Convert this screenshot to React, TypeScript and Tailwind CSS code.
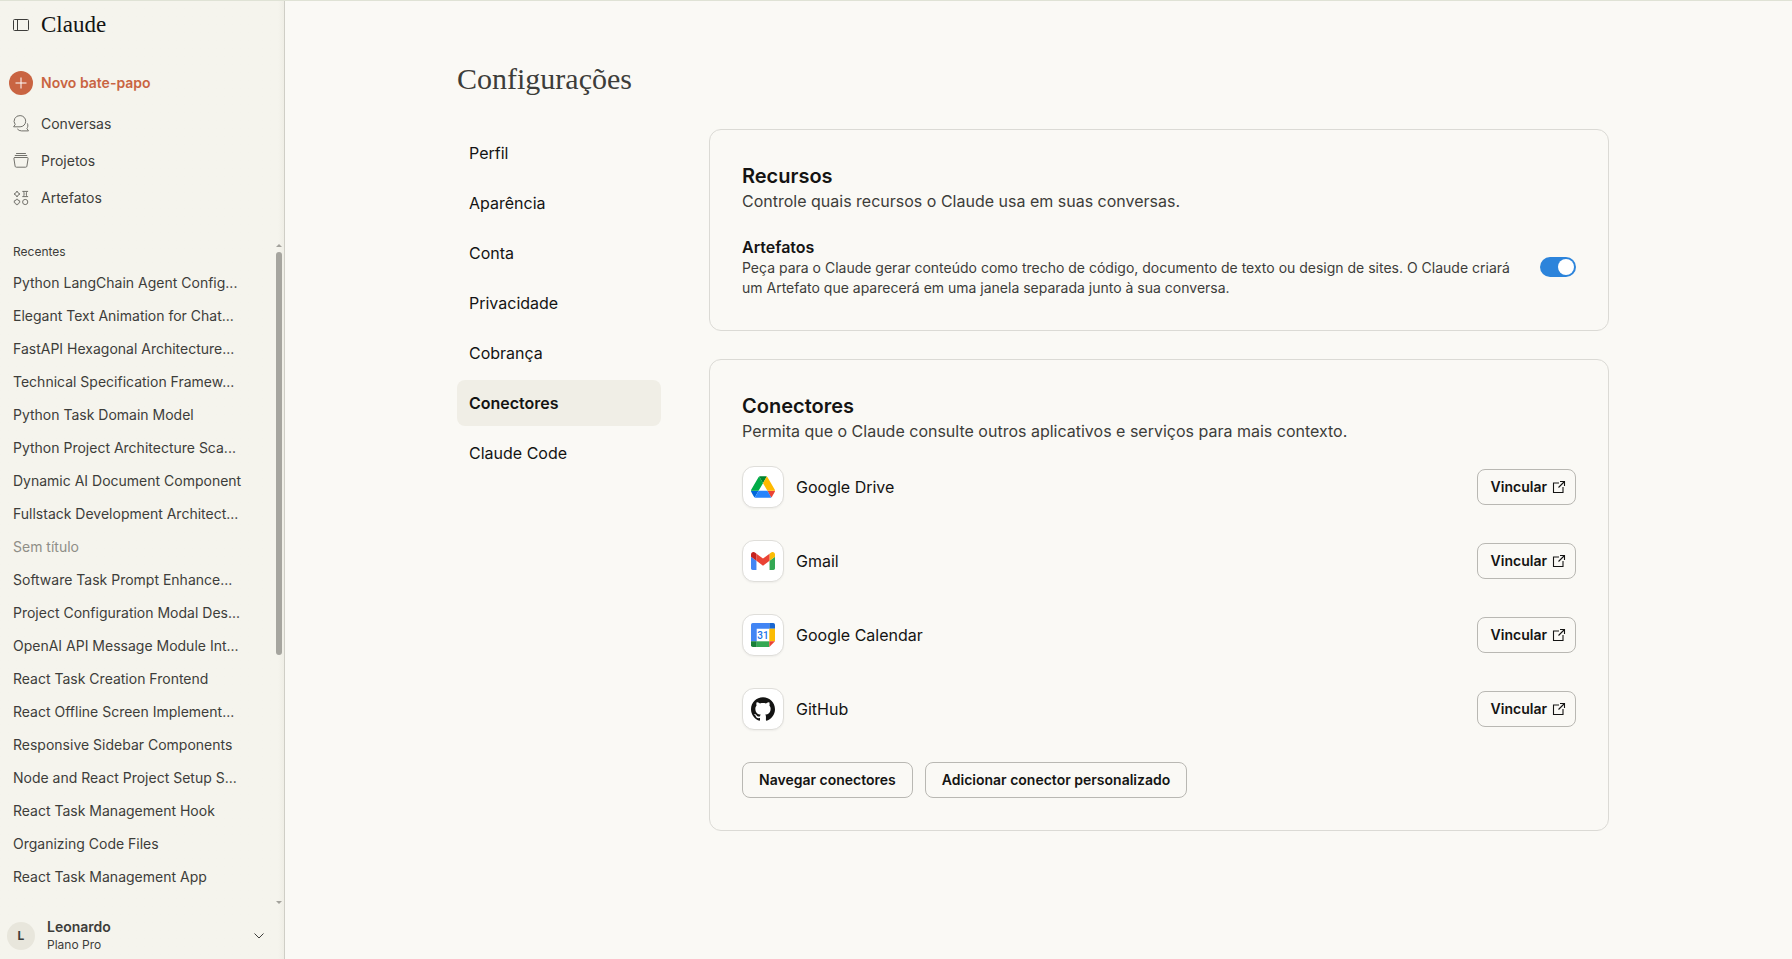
import { useState } from "react";
import type { ReactNode } from "react";

const recents = [
  "Python LangChain Agent Config...",
  "Elegant Text Animation for Chat...",
  "FastAPI Hexagonal Architecture...",
  "Technical Specification Framew...",
  "Python Task Domain Model",
  "Python Project Architecture Sca...",
  "Dynamic AI Document Component",
  "Fullstack Development Architect...",
  "Sem título",
  "Software Task Prompt Enhance...",
  "Project Configuration Modal Des...",
  "OpenAI API Message Module Int...",
  "React Task Creation Frontend",
  "React Offline Screen Implement...",
  "Responsive Sidebar Components",
  "Node and React Project Setup S...",
  "React Task Management Hook",
  "Organizing Code Files",
  "React Task Management App",
];

const sections = ["Perfil", "Aparência", "Conta", "Privacidade", "Cobrança", "Conectores", "Claude Code"];

function SidebarIcon() {
  return (
    <svg width="16" height="12" viewBox="0 0 16 12" fill="none" stroke="currentColor" aria-hidden="true">
      <rect x=".5" y=".5" width="15" height="11" rx="1" />
      <path d="M4.5.5v11" />
    </svg>
  );
}

function ChatsIcon() {
  return (
    <svg width="16" height="17" viewBox="0 0 16 17" fill="none" stroke="currentColor" strokeLinejoin="round" aria-hidden="true">
      <path d="M7.1.6a5.6 5.6 0 1 1 0 11.2H.6l1.6-2.3A5.6 5.6 0 0 1 7.1.6Z" />
      <path d="M4.3 13.9a5.4 5.4 0 0 0 4.2 2h7l-1.6-2.3c1-1.4 1.3-3.3.5-5.2" />
    </svg>
  );
}

function ProjectsIcon() {
  return (
    <svg width="16" height="15" viewBox="0 0 16 15" fill="none" stroke="currentColor" strokeLinejoin="round" strokeLinecap="round" aria-hidden="true">
      <path d="M3.5.5h9M2.2 2.5h11.6" />
      <path d="M1.8 4.5h12.4a.9.9 0 0 1 .9 1l-1.2 7.700a1.200 1.200 0 0 1-1.200 1H3.300a1.200 1.200 0 0 1-1.200-1L.9 5.500a.9.900 0 0 1 .9-1Z" />
    </svg>
  );
}

function ArtifactsIcon() {
  return (
    <svg width="16" height="16" viewBox="0 0 16 16" fill="none" stroke="currentColor" strokeLinejoin="round" aria-hidden="true">
      <path d="M4 1 5.1 2.9 7 4 5.1 5.1 4 7 2.9 5.1 1 4l1.9-1.1Z" />
      <path d="M9.3 1.4h5.8M9.3 6.6h5.8M10.5 1.4c.8 1.6.8 3.6 0 5.2M13.9 1.4c-.8 1.6-.8 3.6 0 5.2" />
      <path d="M3.2 9.3h1.6l.4 1.2 1.5.3v1.9l-1.3.5-.6 1.4H3.2l-.6-1.4-1.3-.5v-1.9l1.5-.3Z" />
      <circle cx="12.2" cy="12" r="2.6" />
    </svg>
  );
}

function ExternalIcon() {
  return (
    <svg width="14" height="14" viewBox="0 0 14 14" fill="none" stroke="currentColor" strokeWidth="1.1" aria-hidden="true">
      <path d="M7 3H1.5v9.500H11V7M8 1.500h4.500V6M12.500 1.500 6.500 7.500" />
    </svg>
  );
}

function DriveLogo() {
  return (
    <svg width="24" height="22" viewBox="0 0 87.3 78" aria-hidden="true">
      <path fill="#0066da" d="m6.6 66.85 3.85 6.65c.8 1.4 1.95 2.5 3.3 3.3l13.75-23.8h-27.5c0 1.55.4 3.1 1.2 4.5z" />
      <path fill="#00ac47" d="m43.65 25-13.75-23.8c-1.35.8-2.5 1.9-3.3 3.3l-25.4 44a9.06 9.06 0 0 0 -1.2 4.5h27.5z" />
      <path fill="#ea4335" d="m73.55 76.8c1.35-.8 2.5-1.9 3.3-3.3l1.6-2.75 7.65-13.25c.8-1.4 1.2-2.95 1.2-4.5h-27.502l5.852 11.5z" />
      <path fill="#00832d" d="m43.65 25 13.75-23.8c-1.35-.8-2.9-1.2-4.5-1.2h-18.5c-1.6 0-3.15.45-4.5 1.2z" />
      <path fill="#2684fc" d="m59.8 53h-32.3l-13.75 23.8c1.35.8 2.9 1.2 4.5 1.2h50.8c1.6 0 3.15-.45 4.5-1.2z" />
      <path fill="#ffba00" d="m73.4 26.5-12.7-22c-.8-1.4-1.95-2.5-3.3-3.3l-13.75 23.8 16.15 28h27.45c0-1.55-.4-3.1-1.2-4.5z" />
    </svg>
  );
}

function GmailLogo() {
  return (
    <svg width="24" height="18" viewBox="52 42 88 66" aria-hidden="true">
      <path fill="#4285f4" d="M58 108h14V74L52 59v43c0 3.32 2.69 6 6 6" />
      <path fill="#34a853" d="M120 108h14c3.32 0 6-2.69 6-6V59l-20 15" />
      <path fill="#fbbc04" d="M120 48v26l20-15v-8c0-7.42-8.47-11.65-14.4-7.2" />
      <path fill="#ea4335" d="M72 74V48l24 18 24-18v26L96 92" />
      <path fill="#c5221f" d="M52 51v8l20 15V48l-5.6-4.2c-5.94-4.45-14.4-.22-14.4 7.2" />
    </svg>
  );
}

function CalendarLogo() {
  return (
    <svg width="24" height="24" viewBox="0 0 24 24" aria-hidden="true">
      <path fill="#fff" d="M5.5 5.5h13v13h-13z" />
      <path fill="#4285f4" d="M1.8 0h16.500v5.700H5.700v12.600H0V1.800A1.800 1.800 0 0 1 1.800 0Z" />
      <path fill="#1967d2" d="M18.300 0h3.900A1.800 1.800 0 0 1 24 1.800v3.900h-5.700z" />
      <path fill="#fbbc04" d="M18.300 5.700H24v12.600h-5.700z" />
      <path fill="#34a853" d="M5.700 18.300h12.600V24H5.700z" />
      <path fill="#188038" d="M0 18.300h5.700V24H1.800A1.800 1.800 0 0 1 0 22.200z" />
      <path fill="#ea4335" d="M18.300 24 24 18.300h-5.700z" />
      <text x="12" y="15.600" textAnchor="middle" fontSize="10" fontWeight="500" fontFamily="Roboto, sans-serif" fill="#1a73e8">31</text>
    </svg>
  );
}

function GitHubLogo() {
  return (
    <svg width="24" height="24" viewBox="0 0 24 24" fill="#141413" aria-hidden="true">
      <path d="M12 .297c-6.63 0-12 5.373-12 12 0 5.303 3.438 9.8 8.205 11.385.6.113.82-.258.82-.577 0-.285-.01-1.04-.015-2.04-3.338.724-4.042-1.61-4.042-1.61C4.422 18.07 3.633 17.7 3.633 17.7c-1.087-.744.084-.729.084-.729 1.205.084 1.838 1.236 1.838 1.236 1.07 1.835 2.809 1.305 3.495.998.108-.776.417-1.305.76-1.605-2.665-.3-5.466-1.332-5.466-5.93 0-1.31.465-2.38 1.235-3.22-.135-.303-.54-1.523.105-3.176 0 0 1.005-.322 3.3 1.23.96-.267 1.98-.399 3-.405 1.02.006 2.04.138 3 .405 2.28-1.552 3.285-1.23 3.285-1.23.645 1.653.24 2.873.12 3.176.765.84 1.23 1.91 1.23 3.22 0 4.61-2.805 5.625-5.475 5.92.42.36.81 1.096.81 2.22 0 1.606-.015 2.896-.015 3.286 0 .315.21.69.825.57C20.565 22.092 24 17.592 24 12.297c0-6.627-5.373-12-12-12" />
    </svg>
  );
}

const connectors: { name: string; logo: ReactNode }[] = [
  { name: "Google Drive", logo: <DriveLogo /> },
  { name: "Gmail", logo: <GmailLogo /> },
  { name: "Google Calendar", logo: <CalendarLogo /> },
  { name: "GitHub", logo: <GitHubLogo /> },
];

const menu: { name: string; icon: ReactNode }[] = [
  { name: "Conversas", icon: <ChatsIcon /> },
  { name: "Projetos", icon: <ProjectsIcon /> },
  { name: "Artefatos", icon: <ArtifactsIcon /> },
];

function Sidebar() {
  return (
    <aside className="sticky top-0 flex h-screen w-[285px] shrink-0 flex-col border-r border-[#cfcec6] bg-[#f5f4ed] bg-linear-to-l from-[#efeee6] to-[#f5f4ed] to-[6px] text-[#3d3d3a]">
      <div className="flex h-12 shrink-0 items-center gap-3 pl-[13px]">
        <button type="button" aria-label="Barra lateral">
          <SidebarIcon />
        </button>
        <a href="#" className="font-['Liberation_Serif',serif] text-[23px] text-[#141413]">
          Claude
        </a>
      </div>

      <a href="#" className="mt-[22px] flex h-6 shrink-0 items-center gap-2 pl-[9px] text-sm font-semibold text-[#c96442]">
        <span className="flex size-6 items-center justify-center rounded-full bg-[#c96442]">
          <svg width="12" height="12" viewBox="0 0 12 12" stroke="#fff" aria-hidden="true">
            <path d="M6 .5v11M.5 6h11" />
          </svg>
        </span>
        Novo bate-papo
      </a>

      <nav className="mt-[10px] shrink-0">
        <ul>
          {menu.map((item) => (
            <li key={item.name}>
              <a href="#" className="flex h-[37px] items-center gap-3 pl-[13px] text-sm">
                <span className="flex w-4 justify-center text-[#73726c]">{item.icon}</span>
                {item.name}
              </a>
            </li>
          ))}
        </ul>
      </nav>

      <div className="mt-[22px] flex min-h-0 grow gap-1 pr-[2px]">
        <div className="min-w-0 grow overflow-hidden pl-[13px]">
          <h2 className="flex h-7 items-center text-xs">Recentes</h2>
          <ul>
            {recents.map((title) => (
              <li key={title}>
                <a
                  href="#"
                  className={`block truncate text-sm leading-[33px] ${title === "Sem título" ? "text-[#8f8e87]" : ""}`}
                >
                  {title}
                </a>
              </li>
            ))}
          </ul>
        </div>
        <div className="flex w-[6px] shrink-0 flex-col items-center pt-[6px] text-[#a3a29c]" aria-hidden="true">
          <svg width="6" height="3" viewBox="0 0 6 3" fill="currentColor">
            <path d="M3 0 6 3H0z" />
          </svg>
          <div className="mt-[5px] h-[61%] w-[6px] shrink-0 rounded-full bg-[#a6a59f]" />
          <svg className="mt-auto" width="6" height="3" viewBox="0 0 6 3" fill="currentColor">
            <path d="M0 0h6L3 3z" />
          </svg>
        </div>
      </div>

      <button type="button" className="mt-2 flex h-12 shrink-0 items-center gap-3 pr-5 pl-[7px] text-left">
        <span className="flex size-7 items-center justify-center rounded-full bg-[#e8e6dc] text-xs font-bold">L</span>
        <span className="grow">
          <span className="block text-sm leading-[18px] font-semibold">Leonardo</span>
          <span className="block text-xs leading-[18px]">Plano Pro</span>
        </span>
        <svg width="10" height="6" viewBox="0 0 10 6" fill="none" stroke="currentColor" aria-hidden="true">
          <path d="m.5.5 4.5 4.500L9.500.5" />
        </svg>
      </button>
    </aside>
  );
}

function Card({ title, text, children }: { title: string; text: string; children: ReactNode }) {
  return (
    <section className="rounded-xl border border-[#dbdad5] p-8">
      <h2 className="text-xl leading-7 font-semibold text-[#141413]">{title}</h2>
      <p className="text-base leading-[22px]">{text}</p>
      {children}
    </section>
  );
}

const outlined =
  "flex h-9 items-center rounded-lg border border-[#b9b8b3] text-sm font-semibold whitespace-nowrap text-[#141413]";

export default function App() {
  const [enabled, setEnabled] = useState(true);
  return (
    <div className="flex min-h-screen border-t border-[#dfe2d5] bg-[#faf9f5] font-['Inter',sans-serif] text-[#3d3d3a]">
      <Sidebar />
      <main className="min-w-0 grow pr-[11px]">
        <div className="mx-auto max-w-6xl">
          <h1 className="pt-14 font-['Liberation_Serif',serif] text-3xl leading-[44px]">Configurações</h1>
          <div className="mt-7 flex items-start gap-12">
            <nav className="w-[204px] shrink-0">
              <ul className="flex flex-col gap-1 pt-[1px]">
                {sections.map((name) => (
                  <li key={name}>
                    <a
                      href="#"
                      className={`flex h-[46px] items-center rounded-lg px-3 text-base text-[#141413] ${
                        name === "Conectores" ? "bg-[#f0eee6] font-semibold" : ""
                      }`}
                    >
                      {name}
                    </a>
                  </li>
                ))}
              </ul>
            </nav>

            <div className="flex min-w-0 grow flex-col gap-7">
              <Card title="Recursos" text="Controle quais recursos o Claude usa em suas conversas.">
                <div className="mt-6 flex items-center gap-6">
                  <label htmlFor="artifacts" className="grow">
                    <span className="block text-base leading-[22px] font-semibold text-[#141413]">Artefatos</span>
                    <span className="block text-sm leading-5">
                      Peça para o Claude gerar conteúdo como trecho de código, documento de texto ou design de sites. O
                      Claude criará um Artefato que aparecerá em uma janela separada junto à sua conversa.
                    </span>
                  </label>
                  <input
                    id="artifacts"
                    type="checkbox"
                    role="switch"
                    checked={enabled}
                    onChange={(e) => setEnabled(e.target.checked)}
                    className="flex h-5 w-9 shrink-0 appearance-none items-center rounded-full bg-[#b9b8b3] p-[2px] before:size-4 before:rounded-full before:bg-white checked:justify-end checked:bg-[#2c84db]"
                  />
                </div>
              </Card>

              <Card title="Conectores" text="Permita que o Claude consulte outros aplicativos e serviços para mais contexto.">
                <ul className="mt-6 flex flex-col gap-8">
                  {connectors.map((c) => (
                    <li key={c.name} className="flex items-center gap-3">
                      <span className="flex size-[42px] items-center justify-center rounded-xl border border-[#dfdeda] bg-white shadow-xs">
                        {c.logo}
                      </span>
                      <span className="grow text-base text-[#141413]">{c.name}</span>
                      <button type="button" className={`${outlined} gap-[5px] pr-[9px] pl-[13px]`}>
                        Vincular
                        <ExternalIcon />
                      </button>
                    </li>
                  ))}
                </ul>
                <div className="mt-8 flex gap-3">
                  <button type="button" className={`${outlined} px-4`}>
                    Navegar conectores
                  </button>
                  <button type="button" className={`${outlined} px-4`}>
                    Adicionar conector personalizado
                  </button>
                </div>
              </Card>
            </div>
          </div>
        </div>
      </main>
    </div>
  );
}
